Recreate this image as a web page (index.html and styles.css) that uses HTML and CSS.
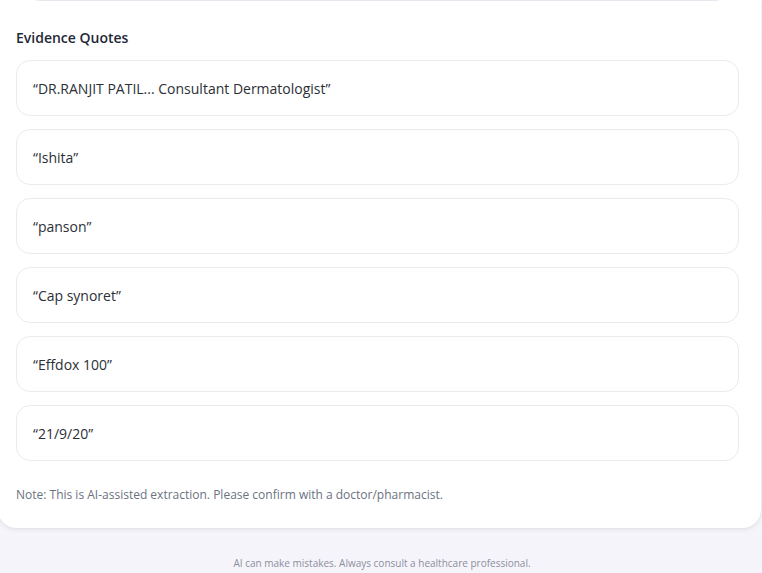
FILE: index.html
```html
<!DOCTYPE html>
<html>
<head>
<meta charset="utf-8">
<link rel="stylesheet" href="styles.css">
</head>
<body>
<div class="page">
  <div class="card">
    <div class="prev-box"></div>
    <h3 class="section-title">Evidence Quotes</h3>
    <div class="quotes">
      <div class="quote">“DR.RANJIT PATIL... Consultant Dermatologist”</div>
      <div class="quote">“Ishita”</div>
      <div class="quote">“panson”</div>
      <div class="quote">“Cap synoret”</div>
      <div class="quote">“Effdox 100”</div>
      <div class="quote">“21/9/20”</div>
    </div>
    <p class="note">Note: This is AI-assisted extraction. Please confirm with a doctor/pharmacist.</p>
  </div>
  <footer class="footer">AI can make mistakes. Always consult a healthcare professional.</footer>
</div>
</body>
</html>
```

FILE: styles.css
```css
html, body {
  margin: 0;
  padding: 0;
}
body {
  font-family: "Open Sans", "Noto Sans", sans-serif;
  background: linear-gradient(180deg, #faf9fc 0%, #f6f4fb 100%);
  color: #1f2937;
  height: 573px;
  overflow: hidden;
}
.page {
  display: flex;
  flex-direction: column;
}
.card {
  background: #ffffff;
  margin-left: -2px;
  width: 763px;
  padding: 0 22px 0 18px;
  box-sizing: border-box;
  border-radius: 0 0 18px 18px;
  box-shadow: 0 2px 4px rgba(0, 0, 0, 0.07), 0 0 1px rgba(0, 0, 0, 0.12);
  height: 528px;
  display: flex;
  flex-direction: column;
}
.prev-box {
  margin: -20px 12px 0 12px;
  height: 20px;
  border: 1px solid #e5e8ee;
  border-top: none;
  border-radius: 0 0 12px 12px;
}
.section-title {
  margin: 28px 0 0 0;
  font-size: 14px;
  font-weight: 600;
  color: #1f2937;
  line-height: 18px;
}
.quotes {
  margin-top: 13px;
  display: flex;
  flex-direction: column;
  gap: 13px;
}
.quote {
  height: 56px;
  box-sizing: border-box;
  border: 1px solid #e9ebef;
  border-radius: 14px;
  padding: 0 16px;
  display: flex;
  align-items: center;
  font-size: 14px;
  color: #2b2f36;
}
.note {
  margin: 26px 0 0 0;
  font-size: 12px;
  color: #6b7280;
  line-height: 16px;
}
.footer {
  text-align: center;
  font-size: 10px;
  color: #8a8f9c;
  margin-top: 28px;
  padding-left: 2px;
}
```
